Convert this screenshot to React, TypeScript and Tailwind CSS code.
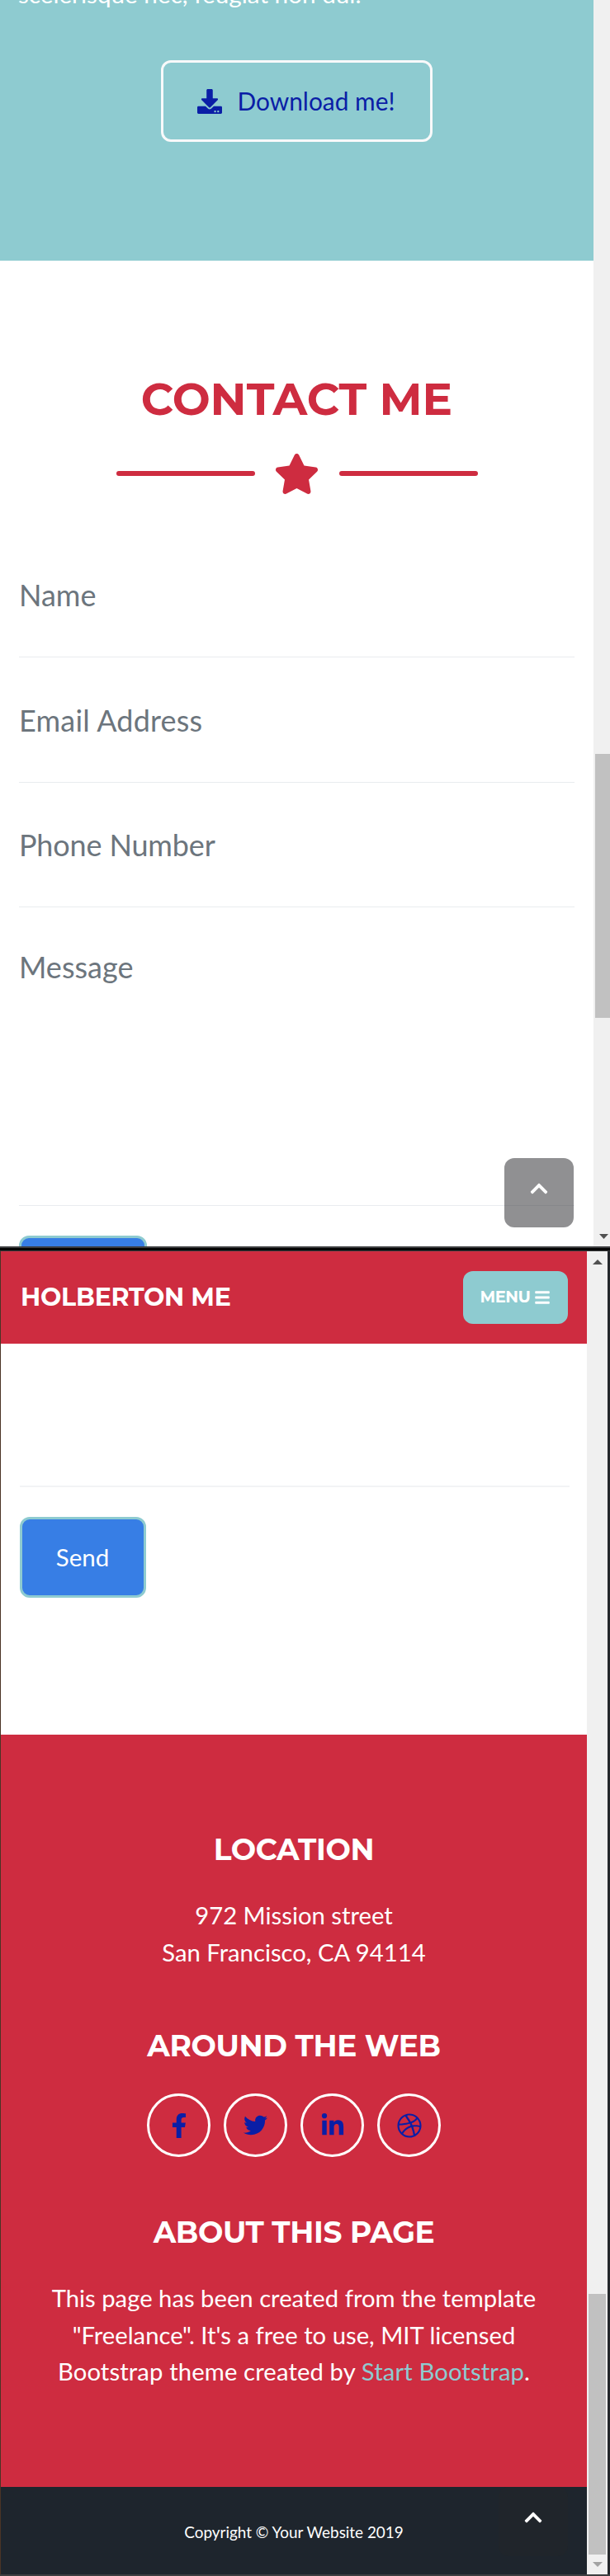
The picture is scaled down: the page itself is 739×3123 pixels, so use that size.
import type { ReactNode } from "react";
import {
  FaDownload,
  FaStar,
  FaBars,
  FaChevronUp,
  FaFacebookF,
  FaTwitter,
  FaLinkedinIn,
  FaDribbble,
} from "react-icons/fa";

const fields = [
  { label: "Name", height: "h-[152px]", tracking: "tracking-normal" },
  { label: "Email Address", height: "h-[152px]", tracking: "tracking-[0.200px]" },
  { label: "Phone Number", height: "h-[151px]", tracking: "tracking-[-0.150px]" },
];

const socials = [
  { name: "facebook", icon: <FaFacebookF size={30} /> },
  { name: "twitter", icon: <FaTwitter size={29} /> },
  { name: "linkedin", icon: <FaLinkedinIn size={30} /> },
  { name: "dribbble", icon: <FaDribbble size={30} /> },
];

function FooterTitle({ children }: { children: ReactNode }) {
  return (
    <h4 className="h-[44px] whitespace-nowrap text-center font-[Montserrat,Lato,sans-serif] text-[36px] font-bold leading-[44px] tracking-[-0.350px]">
      {children}
    </h4>
  );
}

function ContactPanel() {
  return (
    <div className="relative flex h-[1511px] overflow-hidden bg-white">
      <main className="flex w-[719px] flex-col">
        <section className="flex h-[316px] shrink-0 flex-col items-center bg-[#8ecbd0]">
          <p className="-mt-[30px] h-[45px] w-full pl-[22px] text-[29.700px] leading-[45px] text-white">
            scelerisque nec, feugiat non dui.
          </p>
          <a className="mt-[58px] flex h-[99px] w-[329px] items-center justify-center gap-[18px] rounded-[12px] border-[3px] border-[#f8f9fa] pr-[1px] text-[29.900px] text-[#0a1ea6]">
            <FaDownload size={30} />
            <span className="whitespace-nowrap">Download me!</span>
          </a>
        </section>
        <section className="flex shrink-0 flex-col px-[23px] pt-[136px]">
          <h2 className="h-[64px] whitespace-nowrap text-center font-[Montserrat,Lato,sans-serif] text-[54.500px] font-bold leading-[64px] text-[#ce2c40]">
            CONTACT ME
          </h2>
          <div className="mt-[32px] flex h-[52px] items-center justify-center gap-[23.500px] text-[#ce2c40]">
            <span className="h-[6px] w-[168px] rounded-full bg-[#ce2c40]" />
            <FaStar size={55} className="h-[49px]" />
            <span className="h-[6px] w-[168px] rounded-full bg-[#ce2c40]" />
          </div>
          <form className="mt-[45px] flex flex-col text-[36px] text-[#6c757d]">
            {fields.map((f) => (
              <label
                key={f.label}
                className={`flex items-center border-b border-[#e9ecef] ${f.height} ${f.tracking}`}
              >
                {f.label}
              </label>
            ))}
            <label className="flex h-[362px] border-b border-[#e9ecef] pt-[45px] leading-[54px]">Message</label>
            <span className="mt-[36px] h-[98px] w-[155px] rounded-[12px] border-[3px] border-[#8ecbd0] bg-[#377ee5]" />
          </form>
        </section>
      </main>
      <aside className="flex w-[20px] flex-col items-end bg-[#f0f0f0] pt-[914px]">
        <div className="h-[320px] w-[18px] bg-[#c1c1c1]" />
        <svg className="mt-[262px] mr-[2px]" width="11" height="6">
          <path d="M0 0h11L5.500 6z" fill="#505050" />
        </svg>
      </aside>
      <a className="absolute left-[611px] top-[1404px] flex h-[84px] w-[84px] items-center justify-center rounded-[12px] bg-[#343538]/55 pb-[10px] text-white">
        <FaChevronUp size={24} />
      </a>
    </div>
  );
}

function FooterPanel() {
  return (
    <div className="relative flex h-[1604px] overflow-hidden border-l border-[#4b3426] bg-white">
      <main className="flex w-[710px] flex-col text-white">
        <nav className="flex h-[112px] items-center justify-between bg-[#ce2c40] pl-[23px] pr-[23px] font-[Montserrat,Lato,sans-serif] font-bold">
          <span className="whitespace-nowrap pb-[1px] pl-[1px] text-[30px] tracking-[-0.250px]">HOLBERTON ME</span>
          <button className="flex h-[64px] w-[127px] items-center justify-center gap-[5px] rounded-[12px] bg-[#8ecbd0] pb-[1px] text-[19.500px] font-bold tracking-[-0.500px]">
            MENU <FaBars size={20} />
          </button>
        </nav>
        <section className="flex h-[474px] flex-col items-start bg-white pl-[23px] pr-[21px]">
          <div className="h-[174px] w-full border-b-2 border-[#f2f3f5]" />
          <button className="mt-[36px] flex h-[98px] w-[153px] items-center justify-center rounded-[12px] border-[3px] border-[#8ecbd0] bg-[#377ee5] pr-[1px] text-[29.500px]">
            Send
          </button>
        </section>
        <footer className="flex h-[912px] flex-col items-center bg-[#ce2c40] pt-[117px] text-center text-[29.250px] leading-[44.500px]">
          <FooterTitle>LOCATION</FooterTitle>
          <p className="mt-[36px]">
            972 Mission street
            <br />
            San Francisco, CA 94114
          </p>
          <div className="mt-[69px]">
            <FooterTitle>AROUND THE WEB</FooterTitle>
          </div>
          <div className="mt-[36px] flex gap-[16px] text-[#0a1ea6]">
            {socials.map((s) => (
              <a key={s.name} className="flex h-[77px] w-[77px] items-center justify-center rounded-full border-[3px] border-white">
                {s.icon}
              </a>
            ))}
          </div>
          <div className="mt-[69px]">
            <FooterTitle>ABOUT THIS PAGE</FooterTitle>
          </div>
          <p className="mt-[36px] whitespace-nowrap">
            This page has been created from the template
            <br />
            "Freelance". It's a free to use, MIT licensed
            <br />
            <span className="tracking-[0.120px]">
              Bootstrap theme created by <a className="text-[#8ecbd0]">Start Bootstrap</a>.
            </span>
          </p>
        </footer>
        <div className="flex h-[106px] items-center justify-center bg-[#1e252d] pt-[5px] text-[18.900px]">
          Copyright © Your Website 2019
        </div>
      </main>
      <aside className="flex w-[25px] flex-col items-center bg-[#f0f0f0] pt-[10px]">
        <svg width="12" height="6">
          <path d="M0 6h12L6 0z" fill="#505050" />
        </svg>
        <div className="mt-[1248px] h-[316px] w-[21px] bg-[#c1c1c1]" />
        <svg className="mt-[9px]" width="12" height="6">
          <path d="M0 0h12L6 6z" fill="#a3a3a3" />
        </svg>
      </aside>
      <div className="flex-1 bg-[#24272b]" />
      <a className="absolute left-[603px] top-[1498px] flex h-[84px] w-[84px] items-center justify-center rounded-[12px] bg-[#20252b] pb-[10px] text-white">
        <FaChevronUp size={24} />
      </a>
    </div>
  );
}

export default function App() {
  return (
    <div className="h-[3123px] w-[739px] overflow-hidden bg-[#3d3e40] font-[Lato,sans-serif]">
      <ContactPanel />
      <div className="h-[6px] border-b border-t-2 border-[#3d3e40] bg-[#050505]" />
      <FooterPanel />
    </div>
  );
}
